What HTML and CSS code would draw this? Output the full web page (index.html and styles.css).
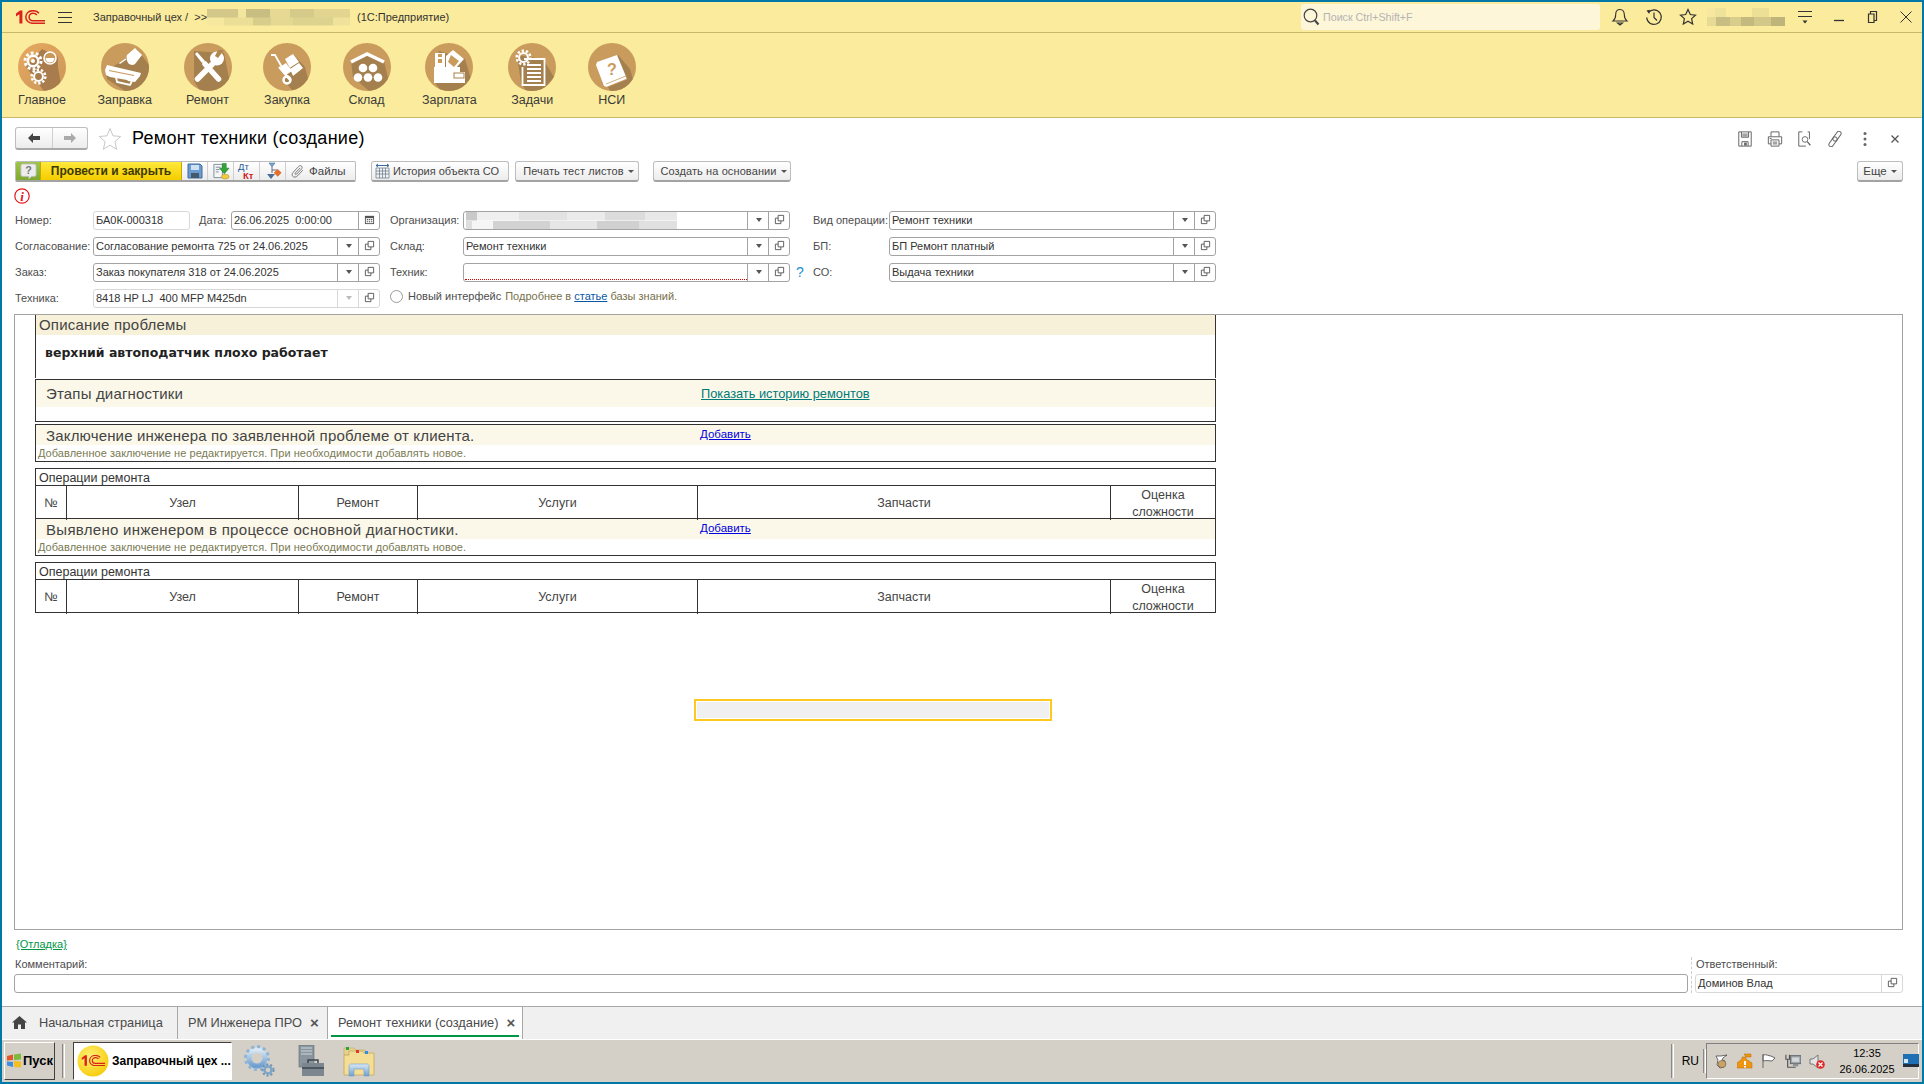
FILE: index.html
```html
<!DOCTYPE html>
<html lang="ru">
<head>
<meta charset="utf-8">
<title>Ремонт техники (создание)</title>
<link rel="stylesheet" href="styles.css">
</head>
<body>
<svg class="defs" width="0" height="0" aria-hidden="true">
  <defs>
    <clipPath id="disc"><circle cx="24" cy="24" r="24"/></clipPath>
    <linearGradient id="warm" x1="0" y1="0" x2="1" y2="1"><stop offset="0" stop-color="#e8a95f"/><stop offset="1" stop-color="#c99759"/></linearGradient>
    <radialGradient id="sun" cx=".4" cy=".35" r=".75"><stop offset="0" stop-color="#fff176"/><stop offset="1" stop-color="#f6c800"/></radialGradient>
    <linearGradient id="blueglass" x1="0" y1="0" x2="0" y2="1"><stop offset="0" stop-color="#d8e8f6"/><stop offset="1" stop-color="#6f9fcf"/></linearGradient>
    <symbol id="open" viewBox="0 0 12 12"><path d="M4.500 1.500h6v6h-6zM4.500 4.500h-3v6h6V7.500" fill="none" stroke="#555" stroke-width="1"/></symbol>
    <symbol id="logo1c" viewBox="0 0 30 14">
      <path d="M1 3.500 5 .5h2.400v13H4.400V4.300L1 6.400z" fill="#d9231c"/>
      <path d="M24 3.200C22.600 1.400 20.400.7 17.800.7c-4 0-7 2.600-7 6.300s3 6.300 7 6.300H30" fill="none" stroke="#d9231c" stroke-width="1.500"/>
      <path d="M21.800 5C21 3.900 19.600 3.300 18 3.300c-2.200 0-3.900 1.500-3.900 3.700s1.700 3.700 3.900 3.700h12" fill="none" stroke="#d9231c" stroke-width="1.500"/>
    </symbol>
    <symbol id="whitegear" viewBox="0 0 20 20">
      <circle cx="10" cy="10" r="5.200" fill="none" stroke="#fff" stroke-width="2.400"/>
      <circle cx="10" cy="10" r="8" fill="none" stroke="#fff" stroke-width="3" stroke-dasharray="2.800 2.230"/>
    </symbol>
  </defs>
</svg>

<div class="app">
  <header class="titlebar">
    <svg class="logo" viewBox="0 0 30 14"><use href="#logo1c"/></svg>
    <svg class="burger" viewBox="0 0 14 11"><path d="M0 .5h14M0 5.500h14M0 10.500h14" stroke="#333" stroke-width="1"/></svg>
    <span class="app-name">Заправочный цех / &nbsp;&gt;&gt;</span>
    <span class="mosaic-title"></span>
    <span class="app-kind">(1С:Предприятие)</span>
    <div class="search">
      <svg class="search-ico" viewBox="0 0 17 18"><circle cx="7.500" cy="7.500" r="6.300" fill="none" stroke="#444" stroke-width="1.200"/><path d="m12 12.500 3.500 4" stroke="#444" stroke-width="2"/></svg>
      <span class="search-ph">Поиск Ctrl+Shift+F</span>
    </div>
    <span class="tb-btn"><svg viewBox="0 0 18 18"><path d="M9 1.500c-3 0-4.300 2.400-4.300 5 0 3.400-1 5-2.700 6.500h14c-1.700-1.500-2.700-3.100-2.700-6.500 0-2.600-1.300-5-4.300-5zM6.500 15h5L9 17z" fill="none" stroke="#333" stroke-width="1.100"/></svg></span>
    <span class="tb-btn"><svg viewBox="0 0 18 18"><path d="M3.300 4.500A7.300 7.300 0 1 1 1.700 9.500M9 4.500V9.500l3 3" fill="none" stroke="#333" stroke-width="1.200"/><path d="M1.500 2.500 4.800 1.800 4.300 6z" fill="#333"/></svg></span>
    <span class="tb-btn"><svg viewBox="0 0 18 18"><path d="m9 1.500 2.300 5 5.200.6-3.900 3.500 1.100 5.400L9 13.300 4.300 16l1.100-5.400-3.900-3.500 5.200-.6z" fill="none" stroke="#333" stroke-width="1.200"/></svg></span>
    <span class="mosaic-user"></span>
    <span class="tb-btn tb-first"><svg viewBox="0 0 18 18"><path d="M2 3.500h14M2 8.500h14" stroke="#333" stroke-width="1"/><path d="m6.500 12.500h5L9 15.500z" fill="#333"/></svg></span>
    <span class="tb-btn"><svg viewBox="0 0 18 18"><path d="M4 12.500h10" stroke="#333" stroke-width="1.300"/></svg></span>
    <span class="tb-btn"><svg viewBox="0 0 18 18"><path d="M6.500 6V3.500h6v9H10M4.500 6h5.500v8.500H4.500z" fill="none" stroke="#333" stroke-width="1.200"/></svg></span>
    <span class="tb-btn tb-last"><svg viewBox="0 0 18 18"><path d="m3.500 3.500 11 11M14.500 3.500l-11 11" stroke="#333" stroke-width="1"/></svg></span>
  </header>

  <nav class="sections">
    <div class="section">
      <svg class="sec-ico" viewBox="0 0 48 48"><g clip-path="url(#disc)"><rect width="48" height="48" fill="url(#warm)"/><path d="M8 24 24 6 40 14V24L44 48H26z" fill="#a87c4c"/></g>
        <use href="#whitegear" x="5" y="8" width="20" height="20"/><use href="#whitegear" x="12" y="25" width="17" height="17"/>
        <circle cx="32" cy="15" r="6" fill="#c99759" stroke="#fff" stroke-width="1.600"/><path d="M27.500 15h9a4.500 4.500 0 0 1-9 0z" fill="#fff"/><circle cx="15" cy="18" r="2" fill="#fff"/></svg>
      <span class="sec-label">Главное</span>
    </div>
    <div class="section">
      <svg class="sec-ico" viewBox="0 0 48 48"><g clip-path="url(#disc)"><rect width="48" height="48" fill="#c99b5c"/><path d="M36 6 48 22V48H24L6 36 5 27 22 18z" fill="#a5804f"/></g>
        <path d="M25 12 33 5l7 7-7 9c-2 1.500-5 1-6.500-.5C25 19 24 14 25 12z" fill="#fff" transform="translate(1 0)"/><path d="m25 16-6.500 4.500" stroke="#fff" stroke-width="1.500"/>
        <path d="m4 27 2-5 34 8-1 3-5 6-7-1-1-1-17-3-4-2z" fill="#fff"/><path d="M8 27.500 33 32.500" stroke="#c99b5c" stroke-width="1.200"/><path d="m15 34 1 5 13 3 2-4" fill="none" stroke="#fff" stroke-width="1.800"/></svg>
      <span class="sec-label">Заправка</span>
    </div>
    <div class="section">
      <svg class="sec-ico" viewBox="0 0 48 48"><g clip-path="url(#disc)"><rect width="48" height="48" fill="#c99b5c"/><path d="M10 8 40 10 46 40 36 48H16L10 38z" fill="#a5804f"/></g>
        <path d="m11 11 7 9 3-2-8-9z" fill="#fff"/><path d="M21 21 34.500 36" stroke="#fff" stroke-width="5.500" stroke-linecap="round"/><path d="M13.500 36 32 17.500" stroke="#fff" stroke-width="5.500" stroke-linecap="round"/><circle cx="33" cy="15.500" r="7" fill="#fff"/><path d="m34 15 6-8h-6l-3 6z" fill="#b08650"/></svg>
      <span class="sec-label">Ремонт</span>
    </div>
    <div class="section">
      <svg class="sec-ico" viewBox="0 0 48 48"><g clip-path="url(#disc)"><rect width="48" height="48" fill="#c99b5c"/><path d="M31 12 42 24 48 48H30L21 38z" fill="#a5804f"/></g>
        <path d="M8 12h4l13 23" fill="none" stroke="#fff" stroke-width="1.800"/><path d="m16 24 11 13" stroke="#fff" stroke-width="2"/><circle cx="24" cy="37" r="3.500" fill="none" stroke="#fff" stroke-width="2.500"/>
        <path d="m17 24 6-4 6 8-6 4zM22 16l8-5 6 8-8 5-1 1zM27 26l9-6 4 5-10 8z" fill="#fff"/></svg>
      <span class="sec-label">Закупка</span>
    </div>
    <div class="section">
      <svg class="sec-ico" viewBox="0 0 48 48"><g clip-path="url(#disc)"><rect width="48" height="48" fill="#c99b5c"/><path d="M8 18 24 11 41 18 48 48H26L10 34z" fill="#a5804f"/></g>
        <path d="M8 19 24 11l17 8" fill="none" stroke="#fff" stroke-width="3.500"/>
        <g fill="#fff"><circle cx="20" cy="25" r="4.300"/><circle cx="30" cy="25" r="4.300"/><circle cx="15" cy="34.500" r="4.300"/><circle cx="25" cy="34.500" r="4.300"/><circle cx="35" cy="34.500" r="4.300"/></g></svg>
      <span class="sec-label">Склад</span>
    </div>
    <div class="section">
      <svg class="sec-ico" viewBox="0 0 48 48"><g clip-path="url(#disc)"><rect width="48" height="48" fill="#c99b5c"/><path d="M14 8 40 16 46 36 36 48H16L9 38z" fill="#a5804f"/></g>
        <path d="M10 10h10v16H10z" fill="#fff"/><path d="M13 11h4v3h-4zM13 16h4v4h-4z" fill="#c99b5c"/><path d="m21 13 7-6 11 9-9 10h-9z" fill="#fff"/><path d="m26 12 8 6-5 6-6-5z" fill="#c99b5c"/>
        <path d="M9 24h26v5h5v11H9z" fill="#fff"/><rect x="29" y="30" width="10" height="5" fill="#fff" stroke="#a5804f" stroke-width="1"/></svg>
      <span class="sec-label">Зарплата</span>
    </div>
    <div class="section">
      <svg class="sec-ico" viewBox="0 0 48 48"><g clip-path="url(#disc)"><rect width="48" height="48" fill="#c99b5c"/><path d="M9 12 35 16 46 34 34 48H18L13 40z" fill="#a5804f"/></g>
        <path d="M16 16h20.500v26h-22V24" fill="none" stroke="#fff" stroke-width="1.800"/><path d="M19 22h14M19 26h14M19 30h14M19 34h14M19 38h14" stroke="#fff" stroke-width="2"/>
        <use href="#whitegear" x="7" y="6" width="17" height="17"/></svg>
      <span class="sec-label">Задачи</span>
    </div>
    <div class="section">
      <svg class="sec-ico" viewBox="0 0 48 48"><g clip-path="url(#disc)"><rect width="48" height="48" fill="#c99b5c"/><path d="M30 12 42 26 46 40 36 48H22L10 22z" fill="#a5804f"/></g>
        <path d="m9 19 20-7 10 24-20 8-3-1-8-21z" fill="#fff"/><path d="m19 44 20-8-1-3-20 8" fill="none" stroke="#c99b5c" stroke-width=".8"/>
        <text class="book-q" x="24" y="32">?</text></svg>
      <span class="sec-label">НСИ</span>
    </div>
  </nav>

  <main class="form">
    <div class="form-head">
      <div class="nav-pair">
        <span class="nav-b"><svg viewBox="0 0 16 12"><path d="M7 1 2 6l5 5V8h7V4H7z" fill="#444"/></svg></span>
        <span class="nav-b nav-b-off"><svg viewBox="0 0 16 12"><path d="m9 1 5 5-5 5V8H2V4h7z" fill="#aaa"/></svg></span>
      </div>
      <svg class="fav" viewBox="0 0 24 24"><path d="m12 1.500 3 7.300 7.700.7-5.800 5.100 1.700 7.700L12 18.200 5.400 22.300l1.700-7.700L1.300 9.500 9 8.800z" fill="#fff" stroke="#c8c8c8"/></svg>
      <h1 class="title">Ремонт техники (создание)</h1>
      <div class="head-tools">
        <span class="ht"><svg viewBox="0 0 16 18"><path d="M1 1h14v16H1zM4 1v6h8V1M5 3.500h6M5 5.500h6M4.500 17v-5h7v5" fill="none" stroke="#666" stroke-width="1.100"/><rect x="7" y="13" width="3" height="3.500" fill="#666"/></svg></span>
        <span class="ht"><svg viewBox="0 0 17 18"><path d="M4 6V1h9v5M1 6.500h15v8h-3M1 6.500v8h3M4 10h9v7H4zM6 12.500h5M6 14.500h5M2.500 8.500h2" fill="none" stroke="#666" stroke-width="1.100"/></svg></span>
        <span class="ht"><svg viewBox="0 0 16 18"><path d="M5 1H1v16h8M11 1h2v8" fill="none" stroke="#666" stroke-width="1.100"/><circle cx="8" cy="9.500" r="3.200" fill="none" stroke="#666"/><path d="m10.500 12 3.500 4" stroke="#666" stroke-width="1.500"/></svg></span>
        <span class="ht"><svg viewBox="0 0 16 16"><g transform="rotate(-55 8 8)" fill="none" stroke="#666" stroke-width="1"><rect x="-1" y="5.800" width="11" height="4.400" rx="2.200"/><rect x="6" y="5.800" width="11" height="4.400" rx="2.200"/></g></svg></span>
        <span class="ht"><svg viewBox="0 0 4 16"><g fill="#666"><circle cx="2" cy="2.500" r="1.500"/><circle cx="2" cy="8" r="1.500"/><circle cx="2" cy="13.500" r="1.500"/></g></svg></span>
        <span class="ht ht-x"><svg viewBox="0 0 10 10"><path d="m1.500 1.500 7 7M8.500 1.500l-7 7" stroke="#555" stroke-width="1.300"/></svg></span>
      </div>
    </div>

    <div class="commands">
      <div class="cmd-group">
        <span class="c-help"><svg viewBox="0 0 19 19"><path d="M3 1h13c1 0 2 1 2 2v10c0 1-1 2-2 2h-3l-3 3v-3H3c-1 0-2-1-2-2V3c0-1 1-2 2-2z" fill="#ededed" stroke="#bbb"/><text class="help-q" x="9.500" y="12.500">?</text></svg></span>
        <span class="c-post">Провести и закрыть</span>
        <span class="c-ico"><svg viewBox="0 0 16 16"><path d="M1 1h12l2 2v12H1z" fill="#6c9bcf" stroke="#3e6c9e"/><rect x="4" y="2" width="8" height="5" fill="#cfe0f2"/><rect x="4" y="10" width="8" height="5" fill="#44586e"/></svg></span>
        <span class="c-ico c-big"><svg viewBox="0 0 19 18"><path d="M2 2h9v14H2z" fill="#f6f6f6" stroke="#7b8ca0"/><path d="M4 5h5M4 7.500h4M4 10h3" stroke="#7b8ca0"/><path d="M11 1h4v5h3l-5 6-5-6h3z" fill="#31a637" stroke="#1d7a24" stroke-width=".6"/><ellipse cx="14" cy="15" rx="4" ry="2.500" fill="#f2cc3d" stroke="#b6912a" stroke-width=".6"/></svg></span>
        <span class="c-ico c-dtkt"><span class="dt">Дт</span><span class="kt">Кт</span></span>
        <span class="c-ico c-big"><svg viewBox="0 0 18 18"><path d="M5 1h6l-3 4z" fill="#7da4cf" stroke="#4a74a3" stroke-width=".6"/><path d="M8 5v6M8 8h5" stroke="#668"/><rect x="11" y="8" width="5.500" height="5.500" transform="rotate(45 13.700 10.700)" fill="#e36f2b"/><path d="M3 12h8l-4 5z" fill="#4a6d94"/></svg></span>
        <span class="c-files"><svg viewBox="0 0 16 16"><path d="M13.500 7 7.500 13.500c-1.800 1.900-4.400 1.900-5.500.5-1.100-1.400-.8-3 .5-4.400l6.200-6.800c1-1.100 2.500-1.200 3.400-.3.900.9.800 2.200-.2 3.300L6.500 11.500c-.6.600-1.200.6-1.600.2-.4-.4-.3-1 .2-1.600L10.500 4.500" fill="none" stroke="#777" stroke-width="1.100"/></svg>Файлы</span>
      </div>
      <span class="btn b-hist"><svg viewBox="0 0 15 16"><path d="M1 5h13v10H1zM1 8h13M1 11h13M4.500 5v10M7.500 5v10M10.500 5v10" fill="#f4f4f4" stroke="#6f8190" stroke-width=".8"/><path d="M1 2.500h13M1 2.500l2-1.500M1 2.500l2 1.500M14 2.500l-2-1.500M14 2.500l-2 1.500" fill="none" stroke="#3e6c9e"/></svg>История объекта СО</span>
      <span class="btn b-print">Печать тест листов<i class="caret"></i></span>
      <span class="btn b-create">Создать на основании<i class="caret"></i></span>
      <span class="btn b-more">Еще<i class="caret"></i></span>
    </div>

    <div class="info-row"><svg class="info" viewBox="0 0 16 16"><circle cx="8" cy="8" r="7.200" fill="#fff" stroke="#e3171b" stroke-width="1.200"/><text class="info-i" x="8" y="12.800">i</text></svg></div>

    <div class="fields">
      <label class="lab">Номер:</label>
      <div class="dual">
        <div class="field f-light f-num"><span class="val">БА0К-000318</span></div>
        <label class="lab lab-date">Дата:</label>
        <div class="field f-date"><span class="val">26.06.2025 &nbsp;0:00:00</span><span class="fb"><svg viewBox="0 0 12 12"><path d="M1 2h10v9H1z" fill="#555"/><path d="M2 4.500h8v5.500H2z" fill="#fff"/><path d="M3 5.500h1.500v1.300H3zM5.300 5.500h1.500v1.300H5.300zM7.600 5.500h1.500v1.300H7.600zM3 7.800h1.500v1.300H3zM5.300 7.800h1.500v1.300H5.300zM7.600 7.800h1.500v1.300H7.600z" fill="#555"/></svg></span></div>
      </div>
      <label class="lab lab-mid">Организация:</label>
      <div class="field"><span class="val"><span class="mosaic-org"></span></span><span class="fb"><i class="drop"></i></span><span class="fb"><svg class="op"><use href="#open"/></svg></span></div>
      <span class="q"></span>
      <label class="lab">Вид операции:</label>
      <div class="field"><span class="val">Ремонт техники</span><span class="fb"><i class="drop"></i></span><span class="fb"><svg class="op"><use href="#open"/></svg></span></div>

      <label class="lab">Согласование:</label>
      <div class="field"><span class="val">Согласование ремонта 725 от 24.06.2025</span><span class="fb"><i class="drop"></i></span><span class="fb"><svg class="op"><use href="#open"/></svg></span></div>
      <label class="lab lab-mid">Склад:</label>
      <div class="field"><span class="val">Ремонт техники</span><span class="fb"><i class="drop"></i></span><span class="fb"><svg class="op"><use href="#open"/></svg></span></div>
      <span class="q"></span>
      <label class="lab">БП:</label>
      <div class="field"><span class="val">БП Ремонт платный</span><span class="fb"><i class="drop"></i></span><span class="fb"><svg class="op"><use href="#open"/></svg></span></div>

      <label class="lab">Заказ:</label>
      <div class="field"><span class="val">Заказ покупателя 318 от 24.06.2025</span><span class="fb"><i class="drop"></i></span><span class="fb"><svg class="op"><use href="#open"/></svg></span></div>
      <label class="lab lab-mid">Техник:</label>
      <div class="field"><span class="val val-req"></span><span class="fb"><i class="drop"></i></span><span class="fb"><svg class="op"><use href="#open"/></svg></span></div>
      <span class="q">?</span>
      <label class="lab">СО:</label>
      <div class="field"><span class="val">Выдача техники</span><span class="fb"><i class="drop"></i></span><span class="fb"><svg class="op"><use href="#open"/></svg></span></div>

      <label class="lab">Техника:</label>
      <div class="field f-light"><span class="val">8418 HP LJ &nbsp;400 MFP M425dn</span><span class="fb"><i class="drop drop-off"></i></span><span class="fb"><svg class="op"><use href="#open"/></svg></span></div>
      <div class="radio-row"><i class="radio"></i><span class="radio-label">Новый интерфейс</span><span class="hint">Подробнее в <a class="kb-link">статье</a> базы знаний.</span></div>
    </div>

    <section class="sheet-panel">
      <div class="sheet">
        <div class="problem">
          <div class="prob-head">Описание проблемы</div>
          <div class="prob-text">верхний автоподатчик плохо работает</div>
        </div>
        <div class="box stages">
          <div class="band band-tall"><span class="band-title">Этапы диагностики</span><a class="lnk-history">Показать историю ремонтов</a></div>
        </div>
        <div class="box concl">
          <div class="band"><span class="band-title">Заключение инженера по заявленной проблеме от клиента.</span><a class="lnk-add">Добавить</a></div>
          <div class="note">Добавленное заключение не редактируется. При необходимости добавлять новое.</div>
        </div>
        <div class="box ops">
          <div class="ops-title">Операции ремонта</div>
          <div class="ops-head">
            <span class="th">№</span><span class="th">Узел</span><span class="th">Ремонт</span><span class="th">Услуги</span><span class="th">Запчасти</span><span class="th th-two">Оценка сложности</span>
          </div>
          <div class="band"><span class="band-title">Выявлено инженером в процессе основной диагностики.</span><a class="lnk-add">Добавить</a></div>
          <div class="note">Добавленное заключение не редактируется. При необходимости добавлять новое.</div>
        </div>
        <div class="box ops ops-last">
          <div class="ops-title">Операции ремонта</div>
          <div class="ops-head">
            <span class="th">№</span><span class="th">Узел</span><span class="th">Ремонт</span><span class="th">Услуги</span><span class="th">Запчасти</span><span class="th th-two">Оценка сложности</span>
          </div>
        </div>
        <div class="focus-box"></div>
      </div>
    </section>

    <a class="debug">{Отладка}</a>
    <div class="bottom-row">
      <div class="bottom-left">
        <label class="cap">Комментарий:</label>
        <div class="field f-comment"></div>
      </div>
      <div class="bottom-div"></div>
      <div class="bottom-right">
        <label class="cap">Ответственный:</label>
        <div class="field f-light"><span class="val">Доминов Влад</span><span class="fb"><svg class="op"><use href="#open"/></svg></span></div>
      </div>
    </div>
  </main>

  <div class="tabs">
    <div class="tab tab-home"><svg class="home" viewBox="0 0 15 13"><path d="M7.500 0 15 6.500h-2V13H9V8.500H6V13H2V6.500H0z" fill="#444"/></svg><span>Начальная страница</span></div>
    <div class="tab tab-rm"><span>РМ Инженера ПРО</span><i class="tab-x">×</i></div>
    <div class="tab tab-cur"><span>Ремонт техники (создание)</span><i class="tab-x">×</i></div>
  </div>

  <footer class="taskbar">
    <div class="start"><svg class="flag" viewBox="0 0 16 15"><path d="m1 3 6-1.500v5.500L1 7.500z" fill="#e3562a"/><path d="m8 1.500 7-1v6l-7 .5z" fill="#7db93b"/><path d="m1 8.500 6 .5v5l-6-1.500z" fill="#3e8de0"/><path d="m8 8 7 .5v6L8 14z" fill="#f4c020"/></svg><span>Пуск</span></div>
    <span class="task-sep"></span>
    <div class="task">
      <svg class="task-ico" viewBox="0 0 32 32"><circle cx="16" cy="16" r="15.500" fill="url(#sun)"/><svg x="4" y="9" width="24" height="13" viewBox="0 0 30 14"><use href="#logo1c"/></svg></svg>
      <span>Заправочный цех ...</span>
    </div>
    <svg class="q-gear" viewBox="0 0 31 32"><circle cx="13" cy="13" r="8" fill="none" stroke="url(#blueglass)" stroke-width="5"/><circle cx="13" cy="13" r="11.500" fill="none" stroke="#8fb4d8" stroke-width="3" stroke-dasharray="3 3"/><circle cx="24" cy="25" r="3.500" fill="none" stroke="#7ea4c8" stroke-width="2.500"/><circle cx="24" cy="25" r="5.600" fill="none" stroke="#6f92b4" stroke-width="2" stroke-dasharray="2 2"/></svg>
    <svg class="q-tool" viewBox="0 0 28 32"><rect x="3" y="0" width="15" height="22" fill="#8b959e" stroke="#5f6870" stroke-width=".6"/><path d="M5 3h11M5 6h11M5 9h11" stroke="#cfd6dc"/><path d="M6 18h22v13H6z" fill="#7b868f"/><path d="M6 23h22" stroke="#3e464e" stroke-width="1.500"/><path d="M12 18v-3h10v3" fill="none" stroke="#3e464e" stroke-width="1.500"/></svg>
    <svg class="q-folder" viewBox="0 0 32 32"><path d="M1 3h10l2 2h9v5H1z" fill="#e6d290" stroke="#c2a85a" stroke-width=".6"/><path d="M6 6h13l2 2h10v22H1V10h5z" fill="#f4dd95" stroke="#c6a85a" stroke-width=".8"/><rect x="3" y="2" width="3" height="3" fill="#29a33a"/><rect x="13" y="5" width="3" height="3" fill="#dd3b2c"/><rect x="22" y="6" width="3" height="3" fill="#2f8fe0"/><path d="M6 31V21c0-1 1-2 2-2h16c1 0 2 1 2 2v10h-5v-7H11v7z" fill="url(#blueglass)" stroke="#6f9fcf" stroke-width=".6"/></svg>
    <span class="tray-sep tray-sep-a"></span>
    <span class="lang">RU</span>
    <span class="tray-sep tray-sep-b"></span>
    <div class="tray">
      <svg class="t-ico" viewBox="0 0 16 16"><path d="M3 3h5l6-1-4 3-1 2 3 1-1 6-4 1-3-3 1-5z" fill="#fff" stroke="#333" stroke-width=".7"/><ellipse cx="9" cy="11" rx="4" ry="3.600" fill="#c9a36a" stroke="#6d5530" stroke-width=".6"/></svg>
      <svg class="t-ico" viewBox="0 0 16 16"><path d="M0 15v-5l5-4V4h4L7 1h7v3H9v2l6 4v5z" fill="#ee9612" stroke="#b56b06" stroke-width=".5"/><path d="M7 8h2v4H7zM7 13h2v1.500H7z" fill="#fff"/></svg>
      <svg class="t-ico" viewBox="0 0 16 16"><path d="M2 1v14M2 2c4-1 5 1 8 1l4 2-3 3c-3 0-5-1-9 0z" fill="#fff" stroke="#666"/></svg>
      <svg class="t-ico" viewBox="0 0 18 16"><rect x="6" y="2" width="12" height="9" fill="#9ca3a8" stroke="#5a6167"/><rect x="8" y="4" width="8" height="5" fill="#d4d7d9"/><path d="M1 1v5h4V1M3 6v9h9" fill="none" stroke="#555" stroke-width="1.300"/><rect x="9" y="11" width="6" height="3" fill="#8b9297"/></svg>
      <svg class="t-ico" viewBox="0 0 16 16"><path d="M1 6h3l5-4v13l-5-4H1z" fill="#e4e4e4" stroke="#777"/><circle cx="11.500" cy="11.500" r="4.300" fill="#e02828"/><path d="m9.500 9.500 4 4M13.500 9.500l-4 4" stroke="#fff" stroke-width="1.200"/></svg>
      <div class="clock"><span>12:35</span><span>26.06.2025</span></div>
      <svg class="t-desk" viewBox="0 0 16 13"><rect width="16" height="13" fill="#1f6fb5"/><rect y="10" width="16" height="3" fill="#233040"/><rect x="1" y="5" width="4" height="4" fill="#d8e6f4"/></svg>
    </div>
  </footer>
</div>
</body>
</html>
```
FILE: styles.css
```css
* { box-sizing: border-box; }
html, body { margin: 0; padding: 0; background: #fff; }
body { font-family: "Liberation Sans", Arial, sans-serif; font-size: 11px; color: #333; overflow: hidden; }
.defs { display: block; position: absolute; }
svg { display: block; }

.app { width: 1924px; height: 1084px; display: flex; flex-direction: column; border: 2px solid #0079a8; }

/* title bar */
.titlebar { height: 31px; flex: none; display: flex; align-items: center; background: #fbeb9c; border-bottom: 1px solid #c8b869; padding-left: 13px; }
.logo { width: 30px; height: 14px; flex: none; }
.burger { width: 14px; height: 11px; margin-left: 13px; flex: none; }
.app-name { margin-left: 21px; width: 112px; white-space: nowrap; flex: none; }
.app-kind { margin-left: 7px; white-space: nowrap; }
.mosaic-title { width: 143px; height: 17px; margin-left: 2px; flex: none;
  background:
    linear-gradient(90deg, #d3c88a 0 22%, #f3e59b 22% 27%, #c9be82 27% 44%, #e6d994 44% 58%, #d6ca8a 58% 75%, #e2d590 75% 100%) top / 100% 50% no-repeat,
    linear-gradient(90deg, #f6e89e 0 12%, #ebde97 12% 32%, #d8cd8b 32% 45%, #e4d893 45% 60%, #ded28f 60% 88%, #efe29a 88% 100%) bottom / 100% 50% no-repeat; }
.search { margin-left: auto; width: 299px; height: 26px; background: #fdf6d8; border-radius: 3px; display: flex; align-items: center; padding-left: 2px; flex: none; }
.search-ico { width: 17px; height: 18px; flex: none; }
.search-ph { margin-left: 3px; color: #b4b4b4; font-size: 10.7px; white-space: nowrap; }
.tb-btn { width: 34px; height: 22px; display: flex; align-items: center; justify-content: center; flex: none; }
.tb-btn svg { width: 18px; height: 18px; }
.search + .tb-btn { margin-left: 3px; }
.tb-first { margin-left: 3px; }
.tb-last { width: 32px; }
.mosaic-user { width: 78px; height: 18px; margin-left: 2px; flex: none;
  background:
    linear-gradient(90deg, #f6e89e 0 10%, #efe29a 10% 24%, #fbeb9c 24% 58%, #ece097 58% 80%, #fbeb9c 80% 100%) top / 100% 50% no-repeat,
    linear-gradient(90deg, #e7da94 0 12%, #c8bd82 12% 30%, #d8cd8b 30% 44%, #c4b97e 44% 60%, #d3c888 60% 82%, #bfb47a 82% 100%) bottom / 100% 50% no-repeat; }

/* sections */
.sections { height: 85px; flex: none; display: flex; align-items: flex-start; gap: 31.5px; padding: 10px 0 0 16px; background: #fbeb9c; border-bottom: 1px solid #c8b869; }
.section { min-width: 48px; display: flex; flex-direction: column; align-items: center; }
.sec-ico { width: 48px; height: 48px; flex: none; }
.sec-label { font-size: 12.5px; line-height: 16px; margin-top: 1px; color: #3a3a3a; white-space: nowrap; }
.book-q { font: bold 16px "Liberation Sans", sans-serif; fill: #c99b5c; text-anchor: middle; }

/* form */
.form { flex: 1; min-height: 0; padding: 9px 19px 0 12px; display: flex; flex-direction: column; background: #fff; }
.form-head { height: 23px; display: flex; align-items: center; padding-left: 1px; flex: none; }
.nav-pair { width: 73px; height: 23px; display: flex; border: 1px solid #bdbdbd; border-bottom: 2px solid #a9a9a9; border-radius: 3px; background: linear-gradient(#fff, #ececec); flex: none; }
.nav-b { width: 36px; display: flex; align-items: center; justify-content: center; }
.nav-b svg { width: 16px; height: 12px; }
.nav-b-off { border-left: 1px solid #cfcfcf; }
.fav { width: 24px; height: 24px; margin-left: 10px; flex: none; }
.title { margin: 0 0 0 10px; font-size: 18px; letter-spacing: .28px; font-weight: normal; color: #000; white-space: nowrap; line-height: 23px; }
.head-tools { margin-left: auto; margin-right: -7px; display: flex; }
.ht { width: 30px; height: 23px; display: flex; align-items: center; justify-content: center; }
.ht svg { height: 16px; width: 16px; }
.ht-x svg { width: 10px; height: 10px; }

.commands { height: 21px; margin-top: 11px; display: flex; align-items: stretch; padding-left: 1px; flex: none; }
.cmd-group { width: 341px; display: flex; border: 1px solid #bdbdbd; border-bottom: 2px solid #a3a3a3; border-radius: 2px; background: linear-gradient(#fff, #ececec); flex: none; overflow: hidden; }
.c-help { width: 24px; background: linear-gradient(#9ec54a, #7fa92f); display: flex; align-items: center; justify-content: center; flex: none; }
.c-help svg { width: 17px; height: 17px; }
.help-q { font: bold 12px "Liberation Sans", sans-serif; fill: #777; text-anchor: middle; }
.c-post { width: 142px; background: linear-gradient(#ffe93b, #f5cd00); border-left: 1px solid #c7a900; border-right: 1px solid #c7a900; font-weight: bold; color: #3e3900; font-size: 12px; display: flex; align-items: center; justify-content: center; flex: none; white-space: nowrap; }
.c-ico { width: 26px; border-right: 1px solid #cfcfcf; display: flex; align-items: center; justify-content: center; flex: none; }
.c-ico svg { width: 16px; height: 16px; }
.c-ico.c-big svg { width: 18px; height: 18px; }
.c-dtkt { flex-direction: column; align-items: flex-start; padding-left: 4px; font-size: 9.5px; line-height: 9px; font-weight: bold; }
.dt { color: #2a5a9a; font-weight: normal; }
.kt { color: #d0201c; margin-left: 5px; }
.c-files { flex: 1; display: flex; align-items: center; padding-left: 5px; gap: 4px; color: #444; font-size: 11.5px; }
.c-files svg { width: 14px; height: 14px; }
.btn { display: flex; align-items: center; justify-content: center; gap: 3px; border: 1px solid #bdbdbd; border-bottom: 2px solid #a3a3a3; border-radius: 3px; background: linear-gradient(#fff, #ececec); color: #444; white-space: nowrap; flex: none; }
.b-hist { width: 138px; margin-left: 15px; justify-content: flex-start; padding-left: 3px; }
.b-hist svg { width: 15px; height: 16px; }
.b-print { width: 124px; margin-left: 6px; letter-spacing: .1px; padding-left: 3px; }
.b-create { width: 138px; margin-left: 14px; letter-spacing: .1px; padding-left: 3px; }
.b-more { width: 46px; margin-left: auto; font-size: 11.5px; }
.caret { width: 0; height: 0; border: 3px solid transparent; border-top: 3px solid #555; border-bottom: 0; margin-left: 1px; }

.info-row { height: 16px; margin-top: 6px; flex: none; }
.info { width: 16px; height: 16px; }
.info-i { font: italic bold 13px "Liberation Serif", serif; fill: #e3171b; text-anchor: middle; }

/* fields */
.fields { margin-top: 7px; padding-left: 1px; display: grid; grid-template-columns: 78px 287px 83px 327px 23px 76px 327px; grid-auto-rows: 19px; row-gap: 7px; flex: none; }
.lab { display: flex; align-items: center; padding-bottom: 2px; color: #4d4d4d; white-space: nowrap; }
.lab-mid { padding-left: 10px; }
.dual { display: flex; align-items: stretch; }
.f-num { width: 97px; flex: none; }
.lab-date { margin-left: 9px; width: 32px; flex: none; }
.f-date { flex: 1; }
.field { display: flex; align-items: stretch; height: 19px; border: 1px solid #a3a3a3; border-radius: 3px; background: #fff; min-width: 0; }
.f-light { border-color: #d8d8d8; }
.val { flex: 1; min-width: 0; padding: 0 0 2px 2px; display: flex; align-items: center; color: #333; white-space: pre; overflow: hidden; }
.val-req { margin: 0 0 1px 1px; padding: 0; border-bottom: 1px dotted #d00000; }
.fb { width: 21px; border-left: 1px solid #a3a3a3; display: flex; align-items: center; justify-content: center; padding: 0 0 2px 1px; flex: none; }
.f-light .fb { border-left-color: #d8d8d8; }
.fb svg { width: 11px; height: 11px; }
.op { width: 11px; height: 11px; }
.drop { width: 0; height: 0; border: 3px solid transparent; border-top: 4px solid #555; border-bottom: 0; }
.drop-off { border-top-color: #bbb; }
.q { color: #1c8fd0; font-size: 14px; display: flex; align-items: center; padding: 0 0 2px 6px; }
.mosaic-org { display: block; width: 211px; height: 17px; margin: 2px 0 0;
  background:
    linear-gradient(90deg, #c9c9c9 0 5%, #efefef 5% 25%, #e2e2e2 25% 48%, #ebebeb 48% 66%, #dcdcdc 66% 85%, #e8e8e8 85% 100%) top / 100% 50% no-repeat,
    linear-gradient(90deg, #dedede 0 3%, #f5f5f5 3% 13%, #d2d2d2 13% 40%, #e6e6e6 40% 62%, #d0d0d0 62% 82%, #e0e0e0 82% 100%) bottom / 100% 50% no-repeat; }
.radio-row { grid-column: 3 / -1; display: flex; align-items: center; padding-left: 10px; margin-top: -5px; color: #4d4d4d; white-space: nowrap; }
.radio { width: 13px; height: 13px; border: 1.500px solid #9a9a9a; border-radius: 50%; background: #fff; flex: none; }
.radio-label { margin-left: 5px; }
.hint { margin-left: 4px; color: #77704a; }
.kb-link { color: #0b57a4; text-decoration: underline; }

/* sheet */
.sheet-panel { margin-top: 6px; height: 616px; border: 1px solid #a3a3a3; padding-left: 20px; flex: none; overflow: hidden; }
.sheet { width: 1181px; display: flex; flex-direction: column; }
.problem { height: 63px; border-left: 1px solid #333; border-right: 1px solid #333; flex: none; }
.prob-head { height: 20px; background: #f7f1d9; font-size: 15px; letter-spacing: .2px; line-height: 20px; padding-left: 3px; color: #444; }
.prob-text { margin: 9px 0 0 9px; font-family: "DejaVu Sans", sans-serif; font-weight: bold; font-size: 12.5px; line-height: 18px; color: #222; }
.box { border: 1px solid #333; flex: none; }
.stages { height: 43px; margin-top: 1px; }
.concl { height: 38px; margin-top: 2px; }
.ops { margin-top: 6px; }
.band { height: 20px; background: #fbf8ea; display: flex; align-items: center; padding-left: 10px; }
.band-tall { height: 27px; }
.band-title { font-size: 15px; letter-spacing: .17px; color: #444; width: 654px; flex: none; white-space: nowrap; }
.ops .band-title { letter-spacing: .3px; }
.lnk-history { font-size: 12.8px; color: #007a78; text-decoration: underline; margin-left: 1px; white-space: nowrap; }
.lnk-add { font-size: 11.5px; color: #0000e0; text-decoration: underline; margin: -2px 0 0 0; white-space: nowrap; }
.note { height: 16px; font-size: 11px; letter-spacing: .04px; line-height: 16px; color: #7a7a52; padding-left: 2px; white-space: nowrap; }
.ops-title { height: 17px; border-bottom: 1px solid #333; font-size: 12.5px; line-height: 18px; padding-left: 3px; color: #333; }
.ops-head { height: 33px; border-bottom: 1px solid #333; display: grid; grid-template-columns: 31px 232px 119px 280px 413px 1fr; }
.ops-last .ops-head { border-bottom: 0; height: 32px; }
.th { border-right: 1px solid #333; display: flex; align-items: center; justify-content: center; text-align: center; font-size: 12.5px; color: #444; }
.th:last-child { border-right: 0; }
.th-two { line-height: 16.500px; padding: 1px 12px 0; }
.focus-box { margin: 86px 0 0 659px; width: 358px; height: 22px; border: 2px solid #fdc81f; background: #f0f0f0; box-shadow: inset 0 0 0 1px #fff; flex: none; }

/* bottom */
.debug { margin: 7px 0 0 2px; height: 14px; line-height: 14px; font-size: 11px; color: #009646; text-decoration: underline; align-self: flex-start; flex: none; }
.bottom-row { margin-top: 6px; display: flex; flex: none; }
.bottom-left { flex: 1; min-width: 0; }
.bottom-right { width: 208px; flex: none; }
.bottom-div { width: 1px; margin: 0 3px; border-left: 1px dashed #cfcfcf; flex: none; }
.cap { display: block; height: 17px; line-height: 14px; color: #4d4d4d; padding-left: 1px; }
.f-comment { width: 100%; }

/* tabs */
.tabs { height: 33px; flex: none; display: flex; align-items: stretch; background: #f0f0f0; border-top: 1px solid #a8a8a8; font-size: 12.8px; color: #4a4a4a; margin-top: auto; }
.tab { position: relative; display: flex; align-items: center; border-right: 1px solid #a8a8a8; white-space: nowrap; flex: none; padding-bottom: 2px; }
.tab-home { width: 176px; padding-left: 10px; gap: 12px; }
.home { width: 15px; height: 13px; flex: none; }
.tab-rm { width: 150px; padding-left: 10px; }
.tab-cur { width: 195px; padding-left: 10px; background: #fff; }
.tab-cur::after { content: ""; position: absolute; left: 3px; right: 3px; bottom: 2px; height: 2px; background: #009646; }
.tab-x { font-style: normal; font-weight: bold; font-size: 15px; color: #555; margin-left: 8px; }

/* taskbar */
.taskbar { height: 43px; flex: none; display: flex; align-items: center; background: #d4d0c8; border-top: 1px solid #fff; padding: 0 3px 1px 2px; font-size: 12px; color: #000; }
.start { width: 51px; height: 38px; display: flex; align-items: center; justify-content: center; gap: 1px; font-weight: bold; font-size: 13px; border: 1px solid; border-color: #fff #404040 #404040 #fff; flex: none; }
.flag { width: 16px; height: 15px; }
.task-sep { width: 3px; height: 34px; margin-left: 7px; border-left: 1px solid #888; border-right: 1px solid #fff; flex: none; }
.task { width: 159px; height: 38px; margin-left: 8px; display: flex; align-items: center; background: #fff; border: 1px solid; border-color: #404040 #fff #fff #404040; padding-left: 3px; gap: 3px; font-weight: bold; white-space: nowrap; overflow: hidden; flex: none; }
.task-ico { width: 32px; height: 32px; flex: none; }
.q-gear { width: 31px; height: 32px; margin-left: 12px; flex: none; }
.q-tool { width: 28px; height: 32px; margin-left: 21px; flex: none; }
.q-folder { width: 32px; height: 32px; margin-left: 19px; flex: none; }
.tray-sep { width: 3px; height: 34px; border-left: 1px solid #888; border-right: 1px solid #fff; flex: none; }
.tray-sep-a { margin-left: auto; }
.tray-sep-b { height: 24px; margin-left: 4px; }
.lang { margin-left: 8px; font-size: 12px; }
.tray { width: 213px; height: 36px; margin-left: 0; display: flex; align-items: center; border: 1px solid; border-color: #808080 #fff #fff #808080; padding-left: 6px; flex: none; }
.t-ico { width: 16px; height: 16px; margin-right: 8px; flex: none; }
.clock { width: 68px; display: flex; flex-direction: column; align-items: center; line-height: 16px; font-size: 11px; flex: none; }
.t-desk { width: 16px; height: 13px; margin-left: 2px; flex: none; }
```
